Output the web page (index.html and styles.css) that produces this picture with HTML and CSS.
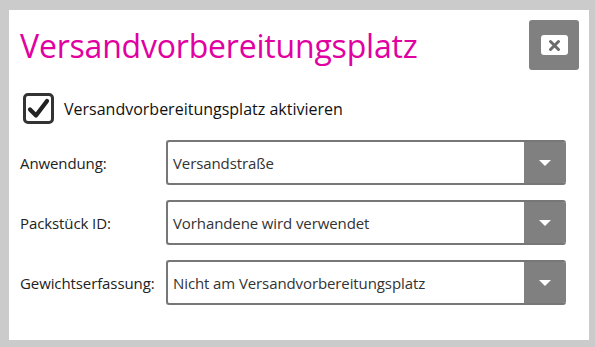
FILE: index.html
```html
<!DOCTYPE html>
<html lang="de">
<head>
    <meta charset="UTF-8">
    <meta name="viewport" content="width=device-width, initial-scale=1.0">
    <title>Versandvorbereitungsplatz</title>
    <link rel="stylesheet" href="styles.css">
</head>
<body>
    <div class="dialog">
        <div class="dialog-header">
            <h1>Versandvorbereitungsplatz</h1>
            <button class="close-btn" type="button">
                <span class="close-inner">
                    <svg width="13" height="13" viewBox="0 0 13 13">
                        <path d="M2.5 2.5 L10.5 10.5 M10.5 2.5 L2.5 10.5" stroke="#6b6b6b" stroke-width="3" stroke-linecap="round"/>
                    </svg>
                </span>
            </button>
        </div>

        <label class="check-row">
            <span class="checkbox">
                <svg width="25" height="25" viewBox="0 0 25 25">
                    <path d="M4 13.5 L10 19.5 L21 5" fill="none" stroke="#222" stroke-width="4.2" stroke-linecap="round" stroke-linejoin="round"/>
                </svg>
            </span>
            <span class="check-label">Versandvorbereitungsplatz aktivieren</span>
        </label>

        <div class="form">
            <div class="form-row">
                <span class="form-label">Anwendung:</span>
                <div class="select">
                    <span class="select-value">Versandstraße</span>
                    <span class="select-arrow"></span>
                </div>
            </div>
            <div class="form-row">
                <span class="form-label">Packstück ID:</span>
                <div class="select">
                    <span class="select-value">Vorhandene wird verwendet</span>
                    <span class="select-arrow"></span>
                </div>
            </div>
            <div class="form-row">
                <span class="form-label">Gewichtserfassung:</span>
                <div class="select">
                    <span class="select-value">Nicht am Versandvorbereitungsplatz</span>
                    <span class="select-arrow"></span>
                </div>
            </div>
        </div>
    </div>
</body>
</html>
```

FILE: styles.css
```css
body {
    margin: 0;
    padding: 10px 0 0 9px;
    background-color: #cbcbcb;
    font-family: "Open Sans", "Noto Sans", sans-serif;
    height: 347px;
    box-sizing: border-box;
    overflow: hidden;
}

.dialog {
    width: 580px;
    height: 330px;
    box-sizing: border-box;
    padding: 10px 10px 0 11px;
    background-color: #fff;
}

.dialog-header {
    display: flex;
    justify-content: space-between;
    align-items: center;
    height: 50px;
}

h1 {
    margin: 0;
    font-weight: normal;
    font-size: 32px;
    color: #e100a0;
    letter-spacing: -0.2px;
}

.close-btn {
    width: 50px;
    height: 50px;
    border: none;
    border-radius: 3px;
    background-color: #808080;
    display: flex;
    align-items: center;
    justify-content: center;
    padding: 0;
}

.close-inner {
    width: 27px;
    height: 20px;
    border-radius: 3px;
    background-color: #fff;
    display: flex;
    align-items: center;
    justify-content: center;
}

.check-row {
    display: flex;
    align-items: center;
    margin: 23px 0 0 3px;
}

.checkbox {
    width: 25px;
    height: 25px;
    border: 3px solid #333;
    border-radius: 5px;
    display: flex;
}

.check-label {
    margin-left: 10px;
    font-size: 16px;
    color: #111;
}

.form {
    display: flex;
    flex-direction: column;
    gap: 15px;
    margin-top: 16px;
}

.form-row {
    display: flex;
    align-items: center;
}

.form-label {
    width: 146px;
    font-size: 15px;
    letter-spacing: -0.1px;
    color: #222;
}

.select {
    width: 400px;
    height: 45px;
    box-sizing: border-box;
    border: 2px solid #777;
    border-right: none;
    border-radius: 3px;
    display: flex;
    align-items: center;
    overflow: hidden;
}

.select-value {
    flex: 1;
    padding-left: 5px;
    font-size: 15px;
    letter-spacing: -0.1px;
    color: #333;
}

.select-arrow {
    width: 42px;
    height: 45px;
    background-color: #808080;
    display: flex;
    align-items: center;
    justify-content: center;
}

.select-arrow::after {
    content: "";
    border-left: 6px solid transparent;
    border-right: 6px solid transparent;
    border-top: 6px solid #fff;
}
```
